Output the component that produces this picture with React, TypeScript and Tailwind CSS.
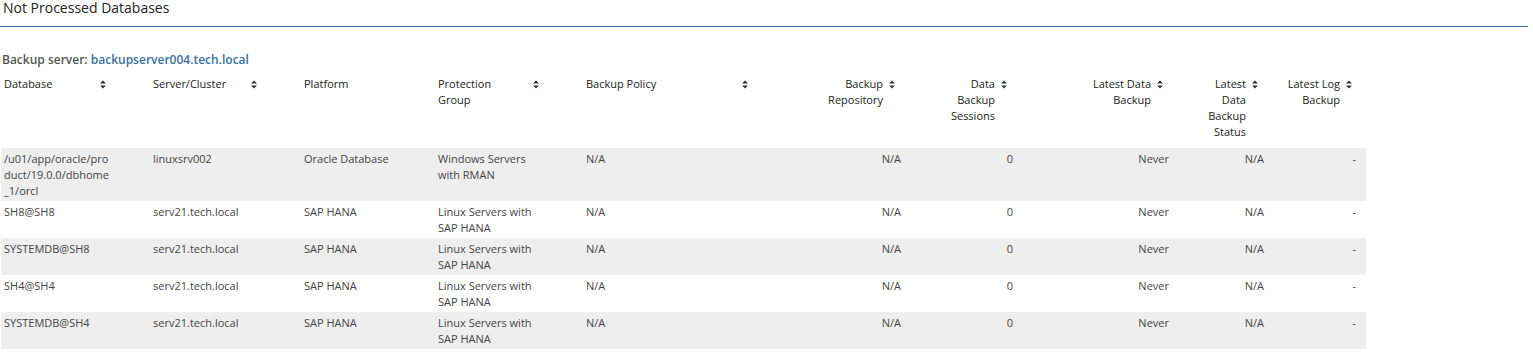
import React from 'react';

type Row = {
  db: string[];
  server: string;
  platform: string;
  group: string[];
};

const rows: Row[] = [
  {
    db: ['/u01/app/oracle/pro', 'duct/19.0.0/dbhome', '_1/orcl'],
    server: 'linuxsrv002',
    platform: 'Oracle Database',
    group: ['Windows Servers', 'with RMAN'],
  },
  { db: ['SH8@SH8'], server: 'serv21.tech.local', platform: 'SAP HANA', group: ['Linux Servers with', 'SAP HANA'] },
  { db: ['SYSTEMDB@SH8'], server: 'serv21.tech.local', platform: 'SAP HANA', group: ['Linux Servers with', 'SAP HANA'] },
  { db: ['SH4@SH4'], server: 'serv21.tech.local', platform: 'SAP HANA', group: ['Linux Servers with', 'SAP HANA'] },
  { db: ['SYSTEMDB@SH4'], server: 'serv21.tech.local', platform: 'SAP HANA', group: ['Linux Servers with', 'SAP HANA'] },
];

const SortIcon: React.FC = () => (
  <svg width="6" height="9" viewBox="0 0 6 9" className="mt-[4px] shrink-0 fill-[#333]">
    <polygon points="0,3.6 3,0.4 6,3.6" />
    <polygon points="0,5.4 6,5.4 3,8.6" />
  </svg>
);

const Lines: React.FC<{ lines: string[] }> = ({ lines }) => (
  <>
    {lines.map((l, i) => (
      <div key={i}>{l}</div>
    ))}
  </>
);

// left aligned header: text block of fixed width, then the sort arrows
const HeadLeft: React.FC<{ lines: string[]; w: string; sort?: boolean }> = ({ lines, w, sort = true }) => (
  <div className="flex items-start">
    <div className={w}>
      <Lines lines={lines} />
    </div>
    {sort && <SortIcon />}
  </div>
);

// right aligned header: text right aligned, arrows next to it
const HeadRight: React.FC<{ lines: string[] }> = ({ lines }) => (
  <div className="flex items-start justify-end pr-[6px]">
    <div className="text-right">
      <Lines lines={lines} />
    </div>
    <span className="ml-[6px] flex">
      <SortIcon />
    </span>
  </div>
);

export default function App() {
  return (
    <div className="w-[1528px] bg-white font-['Open_Sans',sans-serif]">
      <div className="border-b border-[#2b6ea5] pb-[10px]">
        <h1 className="pl-[3px] text-[14px] leading-[16px] text-[#222] font-normal">Not Processed Databases</h1>
      </div>

      <div className="mt-[25px] pl-[2px] text-[12px] leading-[16px] font-semibold text-[#555]">
        Backup server: <span className="text-[#3a6f9f]">backupserver004.tech.local</span>
      </div>

      <table className="mt-[7px] ml-[1px] w-[1365px] table-fixed border-collapse text-[11px] leading-[16px]">
        <colgroup>
          <col className="w-[148px]" />
          <col className="w-[151px]" />
          <col className="w-[134px]" />
          <col className="w-[148px]" />
          <col className="w-[173px]" />
          <col className="w-[150px]" />
          <col className="w-[112px]" />
          <col className="w-[156px]" />
          <col className="w-[95px]" />
          <col className="w-[98px]" />
        </colgroup>
        <thead>
          <tr className="align-top text-[#222] font-normal">
            <th className="px-[3px] pt-[1px] pb-[8px] text-left font-normal">
              <HeadLeft lines={['Database']} w="w-[96px]" />
            </th>
            <th className="px-[4px] pt-[1px] pb-[8px] text-left font-normal">
              <HeadLeft lines={['Server/Cluster']} w="w-[98px]" />
            </th>
            <th className="px-[4px] pt-[1px] pb-[8px] text-left font-normal">
              <HeadLeft lines={['Platform']} w="w-[96px]" sort={false} />
            </th>
            <th className="px-[4px] pt-[1px] pb-[8px] text-left font-normal">
              <HeadLeft lines={['Protection', 'Group']} w="w-[95px]" />
            </th>
            <th className="px-[4px] pt-[1px] pb-[8px] text-left font-normal">
              <HeadLeft lines={['Backup Policy']} w="w-[156px]" />
            </th>
            <th className="px-[4px] pt-[1px] pb-[8px] font-normal">
              <HeadRight lines={['Backup', 'Repository']} />
            </th>
            <th className="px-[4px] pt-[1px] pb-[8px] font-normal">
              <HeadRight lines={['Data', 'Backup', 'Sessions']} />
            </th>
            <th className="px-[4px] pt-[1px] pb-[8px] font-normal">
              <HeadRight lines={['Latest Data', 'Backup']} />
            </th>
            <th className="px-[4px] pt-[1px] pb-[8px] font-normal">
              <HeadRight lines={['Latest', 'Data', 'Backup', 'Status']} />
            </th>
            <th className="px-[4px] pt-[1px] pb-[8px] font-normal">
              <div className="pr-[4px]">
                <HeadRight lines={['Latest Log', 'Backup']} />
              </div>
            </th>
          </tr>
        </thead>
        <tbody className="text-[#444]">
          {rows.map((r, i) => (
            <tr key={i} className={`align-top ${i % 2 === 0 ? 'bg-[#eeeeee]' : 'bg-white'}`}>
              <td className="px-[3px] pt-[3px] pb-[2px]">
                <Lines lines={r.db} />
              </td>
              <td className="px-[4px] pt-[3px] pb-[2px]">{r.server}</td>
              <td className="px-[4px] pt-[3px] pb-[2px]">{r.platform}</td>
              <td className="px-[4px] pt-[3px] pb-[2px]">
                <Lines lines={r.group} />
              </td>
              <td className="px-[4px] pt-[3px] pb-[2px]">N/A</td>
              <td className="px-[4px] pt-[3px] pb-[2px] text-right">N/A</td>
              <td className="px-[4px] pt-[3px] pb-[2px] text-right">0</td>
              <td className="px-[4px] pt-[3px] pb-[2px] text-right">Never</td>
              <td className="px-[4px] pt-[3px] pb-[2px] text-right">N/A</td>
              <td className="px-[4px] pt-[3px] pb-[2px] pr-[10px] text-right">-</td>
            </tr>
          ))}
        </tbody>
      </table>
    </div>
  );
}
